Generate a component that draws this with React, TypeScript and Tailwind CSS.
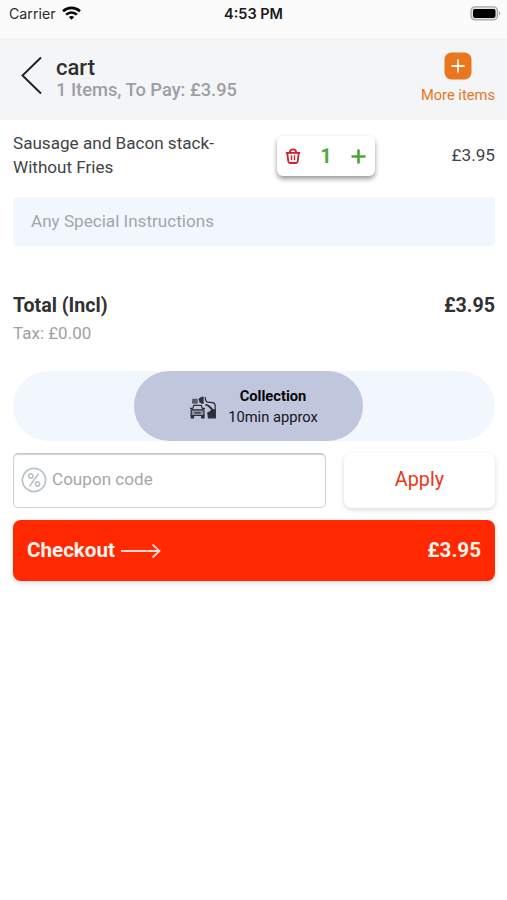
import React, { useState } from "react";

const StatusBar: React.FC = () => (
  <div className="grid h-[38px] grid-cols-3 items-start bg-[#fbfbfb] pt-1 font-[Inter,sans-serif]">
    <div className="flex h-5 items-center gap-[6px] pl-[9px] text-[14.2px] text-[#2b2b2b]">
      <span>Carrier</span>
      <svg width="19" height="14" viewBox="0 0 19 14" className="-mt-0.5" fill="none" stroke="#0a0a0a" strokeWidth="2.6">
        <path d="M1 5.2C5.8.7 13.2.7 18 5.2" />
        <path d="M4.1 8.6c3.1-2.9 7.7-2.9 10.8 0" />
        <path d="M6.8 11l2.7 2.8 2.7-2.8c-1.5-1.4-3.9-1.4-5.4 0z" fill="#0a0a0a" stroke="none" />
      </svg>
    </div>
    <div className="h-5 text-center text-[14.5px] leading-5 font-semibold text-[#1a1a1a]">4:53 PM</div>
    <div className="flex h-5 items-center justify-end pr-[6px]">
      <svg width="31" height="15" viewBox="0 0 31 15" className="-mt-0.5">
        <rect x="1" y="0.9" width="26.5" height="13" rx="4" fill="#e4e4e4" stroke="#a5a5a5" strokeWidth="1.3" />
        <rect x="3" y="2.9" width="22.5" height="9" rx="1.8" fill="#000" />
        <path d="M29 5.2c1.6.8 1.6 3.6 0 4.4z" fill="#a5a5a5" />
      </svg>
    </div>
  </div>
);

const Header: React.FC<{ items: number; total: string }> = ({ items, total }) => (
  <header className="flex h-[82px] items-start bg-[#f3f5f7] pr-[12px] pl-[20px]">
    <button aria-label="Back" className="mt-[18px]">
      <svg width="22" height="40" viewBox="0 0 22 40" fill="none" stroke="#1f1f1f" strokeWidth="1.9">
        <path d="M21 1.5L2.5 19.5L21 37.5" />
      </svg>
    </button>
    <div className="mt-[18px] ml-[14px] flex-1">
      <h1 className="text-[22px] leading-6 font-medium text-[#2e3033]">cart</h1>
      <p className="text-[18.3px] leading-5 font-medium text-[#9c9fa3]">
        {items} Items, To Pay: {total}
      </p>
    </div>
    <button className="mt-[14px] flex flex-col items-center text-[#e8771f]">
      <svg width="28" height="28" viewBox="0 0 28 28">
        <rect x="0.5" y="0.5" width="27" height="27" rx="7" fill="#e8771f" />
        <path d="M14 7.5v13M7.5 14h13" stroke="#fff3e4" strokeWidth="1.8" />
      </svg>
      <span className="mt-[5px] text-[14.7px] leading-5">More items</span>
    </button>
  </header>
);

const TrashIcon = () => (
  <svg width="16" height="16" viewBox="0 0 16 16" fill="none" stroke="#d3202f" strokeWidth="1.8">
    <path d="M0.8 4.9h14.4" />
    <path d="M4.8 4.5C5 .4 11 .4 11.2 4.5" />
    <path d="M2.3 5.2l1 8.2c.1 1 .7 1.6 1.7 1.6h6c1 0 1.6-.6 1.7-1.6l1-8.2" />
    <path d="M6.5 7.3v4.8M9.5 7.3v4.8" strokeWidth="1.4" />
  </svg>
);

const CollectionIcon = () => (
  <svg width="27" height="23" viewBox="0 0 27 23" fill="none" stroke="#2b2d38" strokeWidth="1.2">
    {/* car */}
    <path d="M2.3 13.5l1.5-4.2h7.4l1.5 4.2" />
    <path d="M1.2 13.8h12.8v5.7H1.2z" fill="#2b2d38" fillOpacity="0.35" />
    <path d="M0 12.3h2M13 12.3h2M4.5 16.8h6" />
    <path d="M1.2 19.5h2.3v2.5H1.2zM11.7 19.5h2.3v2.5h-2.3z" fill="#2b2d38" />
    {/* bags */}
    <path d="M2.6 3.2h4.6v4H2.6z" fill="#2b2d38" fillOpacity="0.65" strokeWidth="0.6" />
    <path d="M8.8 2.8l2.4-1.3v5h-1.4zM11.5 1h1.8v6.5h-1.8z" fill="#2b2d38" strokeWidth="0.6" />
    {/* attendant */}
    <path d="M15.2 1c0 2.8.3 4.3 2.3 5.2l5 .4c1.9.2 2.6 1.2 2.7 3v12" />
    <path d="M15.5 8.5l3.2 1.5 3.6 3.5" strokeWidth="1.8" />
    <path d="M17.8 16.8l2.4-1 1.4-2h3.6v8h-6.7z" fill="#2b2d38" />
  </svg>
);

const PercentIcon = () => (
  <svg width="26" height="26" viewBox="0 0 26 26" fill="none" stroke="#b9c3c8" strokeWidth="1.7">
    <circle cx="13" cy="13" r="11.6" />
    <path d="M17.5 6.8L8.5 19.2" />
    <circle cx="9.8" cy="9" r="2.1" />
    <circle cx="16.5" cy="17" r="2.1" />
  </svg>
);

export default function App() {
  const [quantity, setQuantity] = useState(1);
  const [instructions, setInstructions] = useState("");
  const [coupon, setCoupon] = useState("");

  const total = `£${(3.95 * quantity).toFixed(2)}`;

  return (
    <div className="h-[900px] w-[507px] overflow-hidden bg-white font-[Roboto,sans-serif]">
      <StatusBar />
      <Header items={quantity} total={total} />

      <main className="pr-[12px] pl-[13px]">
        <section className="flex h-[77px] items-start text-[#424446]">
          <p className="mt-[11px] w-[264px] pr-12 text-[17.1px] leading-[24px]">
            Sausage and Bacon stack- Without Fries
          </p>
          <div className="mt-[16px] flex h-[40px] w-[98px] items-center justify-between rounded-[6px] bg-white pr-[9px] pl-[8px] shadow-[0_3px_5px_rgba(0,0,0,0.4)]">
            <button aria-label="Remove" onClick={() => setQuantity(Math.max(1, quantity - 1))}>
              <TrashIcon />
            </button>
            <span className="text-[20px] leading-6 font-bold text-[#52a83c]">{quantity}</span>
            <button aria-label="Add" onClick={() => setQuantity(quantity + 1)}>
              <svg width="15" height="15" viewBox="0 0 15 15" stroke="#4ba536" strokeWidth="2.6">
                <path d="M7.5 0.5v14M0.5 7.5h14" />
              </svg>
            </button>
          </div>
          <span className="mt-[23px] ml-auto text-[17.2px] leading-6">{total}</span>
        </section>

        <input
          className="block h-[49px] w-full rounded-[4px] bg-[#f1f7fd] px-[18px] pb-[2px] text-[17.1px] text-[#424446] outline-none placeholder:text-[#a3a6a9]"
          placeholder="Any Special Instructions"
          value={instructions}
          onChange={(e) => setInstructions(e.target.value)}
        />

        <section className="mt-[46px]">
          <div className="flex justify-between pt-px text-[19.6px] leading-[26px] font-bold text-[#2f3133]">
            <span>Total (Incl)</span>
            <span>{total}</span>
          </div>
          <p className="mt-[2px] text-[17px] leading-6 text-[#9fa1a3]">Tax: £0.00</p>
        </section>

        <div className="mt-[26px] flex h-[70px] justify-center rounded-full bg-[#f2f7fd]">
          <button className="-ml-[12px] flex h-full w-[229px] items-center justify-center gap-[11px] rounded-full bg-[#c0c6dc] pt-[2px] pl-[12px]">
            <CollectionIcon />
            <span className="flex flex-col text-[14.7px] leading-[21px] text-[#14151c]">
              <span className="font-bold text-[#06070a]">Collection</span>
              <span>10min approx</span>
            </span>
          </button>
        </div>

        <div className="mt-[12px] flex gap-[18px]">
          <div className="flex h-[55px] w-[313px] items-center rounded-[5px] border border-[#d2d2d2] border-t-[#c8c8c8] pl-[7px] pb-px shadow-[inset_0_1px_1px_rgba(0,0,0,0.18)]">
            <PercentIcon />
            <input
              className="ml-[5px] w-[240px] text-[17.1px] text-[#424446] outline-none placeholder:text-[#a6a6a6]"
              placeholder="Coupon code"
              value={coupon}
              onChange={(e) => setCoupon(e.target.value)}
            />
          </div>
          <button className="h-[55px] flex-1 rounded-[8px] bg-white pb-[2px] text-[19.8px] text-[#ee3517] shadow-[0_2px_5px_rgba(0,0,0,0.15)]">
            Apply
          </button>
        </div>

        <button className="mt-[12px] flex h-[61px] w-full items-center rounded-[8px] bg-[#ff2800] px-[14px] text-[20.6px] font-bold text-[#fff4ef] shadow-[0_2px_5px_rgba(0,0,0,0.15)]">
          <span>Checkout</span>
          <svg width="40" height="16" viewBox="0 0 40 16" className="mt-px ml-[6px]" fill="none" stroke="#ffd9cd" strokeWidth="1.8">
            <path d="M0 8h38M31.5 1.5L38.5 8L31.5 14.5" />
          </svg>
          <span className="ml-auto">{total}</span>
        </button>
      </main>
    </div>
  );
}
